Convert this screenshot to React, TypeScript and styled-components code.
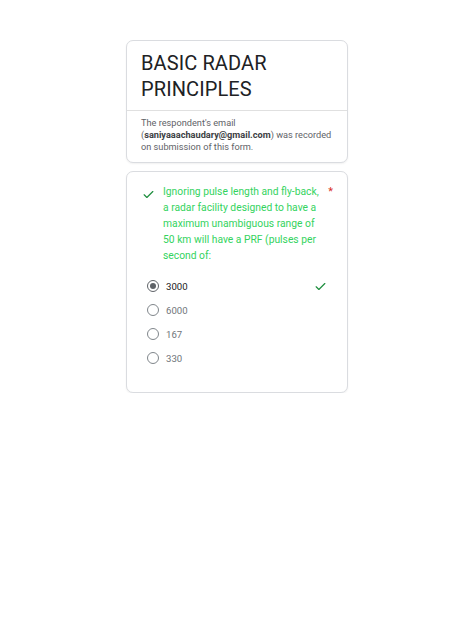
import React from "react";
import styled, { createGlobalStyle } from "styled-components";

const Global = createGlobalStyle`
  html, body { margin: 0; padding: 0; background: #ffffff; }
  body { font-family: Roboto, "Liberation Sans", Arial, sans-serif; }
`;

const Page = styled.div`
  display: flex;
  flex-direction: column;
  align-items: center;
  gap: 8px;
  padding-top: 40px;
`;

const Card = styled.div`
  width: 222px;
  box-sizing: border-box;
  border: 1px solid #dadce0;
  border-radius: 7px;
  background: #fff;
  box-shadow: 0 1px 2px rgba(0,0,0,0.06);
`;

const Header = styled.div`
  padding: 9px 14px 8px;
  border-bottom: 1px solid #e0e0e0;
`;

const Title = styled.div`
  font-size: 20px;
  line-height: 26px;
  color: #202124;
  letter-spacing: 0.1px;
`;

const Note = styled.div`
  padding: 6px 14px 9px;
  font-size: 9.2px;
  line-height: 12px;
  color: #5f6368;
  b { color: #3c4043; font-weight: 700; }
`;

const QuestionCard = styled(Card)`
  padding: 12px 14px 22px 15px;
`;

const QRow = styled.div`
  display: flex;
  align-items: flex-start;
`;

const CheckBox = styled.div`
  width: 21px;
  flex: none;
  padding-top: 2px;
`;

const QText = styled.div`
  flex: 1;
  font-size: 10.3px;
  line-height: 16px;
  color: #33d35e;
`;

const Star = styled.div`
  width: 14px;
  flex: none;
  text-align: right;
  color: #d93025;
  font-size: 11px;
  line-height: 16px;
`;

const Options = styled.div`
  margin-top: 10px;
  display: flex;
  flex-direction: column;
`;

const Option = styled.div`
  height: 24px;
  display: flex;
  align-items: center;
  padding-left: 5px;
`;

const Radio = styled.div<{ $on?: boolean }>`
  width: 12px;
  height: 12px;
  box-sizing: border-box;
  border-radius: 50%;
  border: 1.5px solid ${p => (p.$on ? "#5f6368" : "#80868b")};
  display: flex;
  align-items: center;
  justify-content: center;
  &::after {
    content: "";
    display: ${p => (p.$on ? "block" : "none")};
    width: 6px;
    height: 6px;
    border-radius: 50%;
    background: #5f6368;
  }
`;

const Label = styled.div<{ $on?: boolean }>`
  margin-left: 7px;
  font-size: 9.6px;
  color: ${p => (p.$on ? "#202124" : "#70757a")};
  flex: 1;
`;

const Tick = ({ size = 13 }: { size?: number }) => (
  <svg width={size} height={size} viewBox="0 0 24 24" fill="none">
    <path d="M4 12.5l5 5L20 6.5" stroke="#1e8e3e" strokeWidth="2.2" strokeLinecap="round" strokeLinejoin="round" />
  </svg>
);

const TickSlot = styled.div`
  width: 20px;
  display: flex;
  justify-content: center;
  padding-right: 3px;
`;

const opts = ["3000", "6000", "167", "330"];

export default function App() {
  return (
    <>
      <Global />
      <Page>
        <Card>
          <Header>
            <Title>BASIC RADAR PRINCIPLES</Title>
          </Header>
          <Note>
            The respondent's email (<b>saniyaaachaudary@gmail.com</b>) was recorded on submission of this form.
          </Note>
        </Card>
        <QuestionCard>
          <QRow>
            <CheckBox><Tick /></CheckBox>
            <QText>
              Ignoring pulse length and fly-back, a radar facility designed to have a maximum unambiguous range of 50 km will have a PRF (pulses per second of:
            </QText>
            <Star>*</Star>
          </QRow>
          <Options>
            {opts.map((o, i) => (
              <Option key={o}>
                <Radio $on={i === 0} />
                <Label $on={i === 0}>{o}</Label>
                {i === 0 && <TickSlot><Tick /></TickSlot>}
              </Option>
            ))}
          </Options>
        </QuestionCard>
      </Page>
    </>
  );
}
